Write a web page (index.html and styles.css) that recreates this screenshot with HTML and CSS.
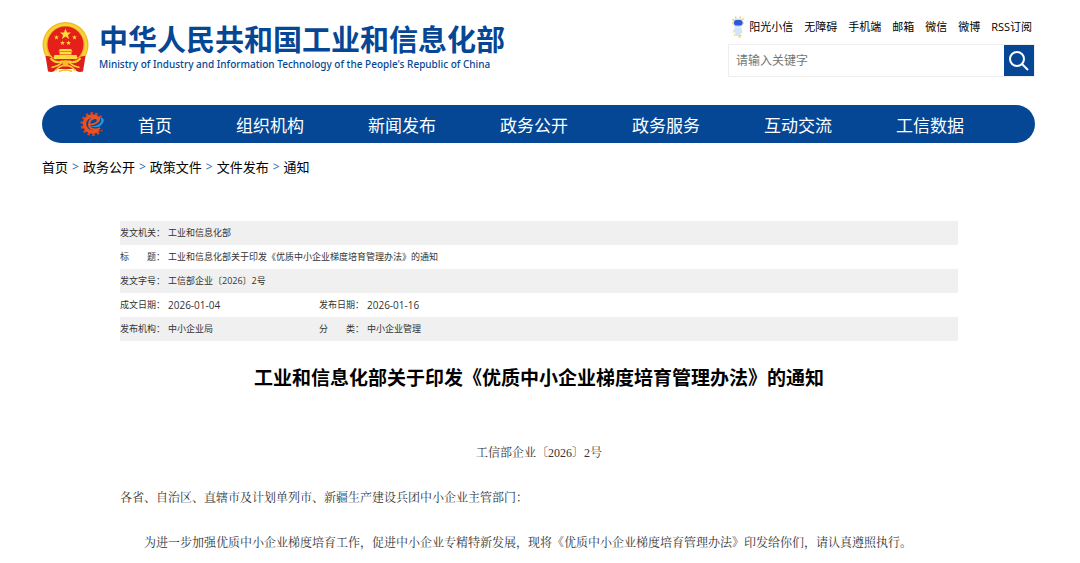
FILE: index.html
```html
<!DOCTYPE html>
<html lang="zh-CN">
<head>
    <meta charset="UTF-8">
    <meta name="viewport" content="width=device-width, initial-scale=1.0">
    <title>工业和信息化部关于印发《优质中小企业梯度培育管理办法》的通知</title>
    <link rel="stylesheet" href="styles.css">
</head>
<body>
    <header class="header">
        <a class="logo" href="#">
            <svg class="emblem" viewBox="0 0 94 102" aria-hidden="true">
                <circle cx="47" cy="46" r="46" fill="#eeb81c"/>
                <circle cx="47" cy="46" r="41" fill="none" stroke="#f8d23c" stroke-width="5"/>
                <circle cx="47" cy="45" r="36" fill="#e71f1b"/>
                <path d="M47 13l3 8h8l-6 5 2 8-7-5-7 5 2-8-6-5h8z" fill="#ffdc3d"/>
                <g fill="#ffdc3d">
                    <path id="star" d="M29 26l1 3h4l-3 2 1 4-3-2-3 2 1-4-3-2h4z"/>
                    <use href="#star" x="36"/>
                    <use href="#star" x="12" y="11"/>
                    <use href="#star" x="24" y="11"/>
                    <path d="M36 54h22l3 5H33zM35 60h24v5H35zM25 66h44l3 8H22z"/>
                </g>
                <path d="M7 68Q16 67 28 76L41 80H53L66 76Q78 67 87 68L82 99Q70 102 66 94H28Q24 102 12 99Z" fill="#db1f1c"/>
                <path d="M17 72Q27 84 39 79H55Q67 84 77 72" fill="none" stroke="#ffce30" stroke-width="4"/>
                <path d="M19 91Q35 88 41 79M75 91Q59 88 53 79M28 97Q34 87 47 87Q60 87 66 97" fill="none" stroke="#ffce30" stroke-width="3"/>
                <circle cx="47" cy="83" r="6" fill="#f6bd25"/>
                <path d="M34 99Q47 93 60 99" fill="none" stroke="#f6bd25" stroke-width="3"/>
            </svg>
            <span class="logo-text">
                <span class="logo-cn">中华人民共和国工业和信息化部</span>
                <span class="logo-en">Ministry of Industry and Information Technology of the People's Republic of China</span>
            </span>
        </a>

        <div class="tools">
            <div class="top-links">
                <a class="robot-link" href="#">
                    <svg class="robot" viewBox="0 0 28 44" aria-hidden="true">
                        <path d="M3 6l3 3M9 1l1 4M18 1v4M25 5l-3 3M2 14h3M26 14h-3" stroke="#f8cf52" stroke-width="3"/>
                        <ellipse cx="14" cy="14" rx="10" ry="9" fill="#c9dcf8"/>
                        <rect x="6" y="8" width="17" height="11" rx="5" fill="#2f57dc"/>
                        <path d="M8 23h12l4 10-4 1-2 6h-8l-2-8-6 2z" fill="#d3e4f6"/>
                        <path d="M6 37l3 2M15 42h4M18 38l2 2" stroke="#f8cf52" stroke-width="3"/>
                    </svg>阳光小信</a>
                <a href="#">无障碍</a>
                <a href="#">手机端</a>
                <a href="#">邮箱</a>
                <a href="#">微信</a>
                <a href="#">微博</a>
                <a href="#">RSS订阅</a>
            </div>
            <form class="search">
                <input type="text" placeholder="请输入关键字" aria-label="请输入关键字">
                <button type="button" aria-label="搜索">
                    <svg viewBox="0 0 20 20" aria-hidden="true">
                        <circle cx="8" cy="8" r="7" fill="none" stroke="#fff" stroke-width="2"/>
                        <path d="M13 13L19 19" stroke="#fff" stroke-width="2"/>
                    </svg>
                </button>
            </form>
        </div>
    </header>

    <nav class="nav">
        <svg class="nav-icon" viewBox="0 0 52 52" aria-hidden="true">
            <circle cx="25" cy="26" r="21" fill="none" stroke="#d9401f" stroke-width="6" stroke-dasharray="5 4.425"/>
            <circle cx="25" cy="26" r="16" fill="none" stroke="#ee501e" stroke-width="7"/>
            <path d="M28 29Q42 26 40 12L52 12V36L44 38Q34 40 28 33Z" fill="#064795"/>
            <path d="M16 27Q30 28 35 21Q38 13 29 14Q19 16 18 26Q18 37 31 37Q36 37 40 34" fill="none" stroke="#f0541f" stroke-width="4"/>
            <path d="M18 30Q36 32 42 22Q44 16 38 12Q52 14 46 24Q38 37 18 30Z" fill="#2696dc"/>
        </svg>
        <a href="#">首页</a>
        <a href="#">组织机构</a>
        <a href="#">新闻发布</a>
        <a href="#">政务公开</a>
        <a href="#">政务服务</a>
        <a href="#">互动交流</a>
        <a href="#">工信数据</a>
    </nav>

    <div class="breadcrumb">
        <a href="#">首页</a>
        <span>&gt;</span>
        <a href="#">政务公开</a>
        <span>&gt;</span>
        <a href="#">政策文件</a>
        <span>&gt;</span>
        <a href="#">文件发布</a>
        <span>&gt;</span>
        <a href="#">通知</a>
    </div>

    <main class="article">
        <table class="info">
            <tr>
                <th>发文机关：</th>
                <td colspan="3">工业和信息化部</td>
            </tr>
            <tr>
                <th>标　　题：</th>
                <td colspan="3">工业和信息化部关于印发《优质中小企业梯度培育管理办法》的通知</td>
            </tr>
            <tr>
                <th>发文字号：</th>
                <td colspan="3">工信部企业〔2026〕2号</td>
            </tr>
            <tr>
                <th>成文日期：</th>
                <td class="first-value date">2026-01-04</td>
                <th>发布日期：</th>
                <td class="date">2026-01-16</td>
            </tr>
            <tr>
                <th>发布机构：</th>
                <td class="first-value">中小企业局</td>
                <th>分　　类：</th>
                <td>中小企业管理</td>
            </tr>
        </table>

        <h1>工业和信息化部关于印发《优质中小企业梯度培育管理办法》的通知</h1>

        <div class="content">
            <p class="doc-number">工信部企业〔2026〕2号</p>
            <p>各省、自治区、直辖市及计划单列市、新疆生产建设兵团中小企业主管部门：</p>
            <p class="indent">为进一步加强优质中小企业梯度培育工作，促进中小企业专精特新发展，现将《优质中小企业梯度培育管理办法》印发给你们，请认真遵照执行。</p>
        </div>
    </main>
</body>
</html>
```
FILE: styles.css
```css
/* Reset */
* {
    box-sizing: border-box;
    margin: 0;
    padding: 0;
}

body {
    padding: 0 45px 0 42px;
    background-color: #fff;
    color: #000;
    font-family: "Open Sans", "Noto Sans CJK SC", sans-serif;
}

a {
    color: inherit;
    text-decoration: none;
}

/* Header */
.header {
    display: flex;
    justify-content: space-between;
    padding-top: 16px;
}

.logo {
    display: flex;
    gap: 10px;
    padding-top: 6px;
    color: #064795;
}

.emblem {
    width: 47px;
    height: 51px;
}

.logo-text {
    display: flex;
    flex-direction: column;
    white-space: nowrap;
}

.logo-cn {
    font-size: 29px;
    line-height: 36px;
    font-weight: bold;
}

.logo-en {
    font-family: "Noto Sans", sans-serif;
    font-size: 10px;
    line-height: 12px;
    font-weight: 500;
}

.top-links {
    display: flex;
    justify-content: flex-end;
    gap: 11px;
    padding-right: 3px;
    font-size: 11px;
    line-height: 22px;
    white-space: nowrap;
}

.robot-link {
    display: flex;
    gap: 4px;
}

.robot {
    width: 14px;
    height: 22px;
}

/* Search box */
.search {
    display: flex;
    width: 307px;
    height: 33px;
    margin-top: 6px;
    border: 1px solid #eee;
}

.search input {
    flex: 1;
    min-width: 0;
    padding: 0 7px;
    border: none;
    background: none;
    font-family: inherit;
    font-size: 12px;
}

.search input::placeholder {
    color: #757575;
}

.search button {
    display: flex;
    align-items: center;
    justify-content: center;
    width: 30px;
    border: none;
    background-color: #064795;
    cursor: pointer;
}

.search svg {
    width: 20px;
    height: 20px;
}

/* Navigation */
.nav {
    display: flex;
    align-items: center;
    gap: 64px;
    height: 38px;
    margin-top: 28px;
    padding-left: 38px;
    border-radius: 19px;
    background-color: #064795;
    color: #fff;
    font-size: 17px;
    white-space: nowrap;
}

.nav-icon {
    width: 26px;
    height: 26px;
    margin-right: -32px;
}

.breadcrumb {
    display: flex;
    gap: 4px;
    padding-top: 14px;
    font-size: 13px;
    line-height: 20px;
}

.breadcrumb span {
    color: #2a6bb5;
    font-size: 12px;
}

/* Article */
.article {
    padding: 44px 77px 0 78px;
}

.info {
    width: 100%;
    border-collapse: collapse;
    color: #333;
    font-size: 9px;
    line-height: 24px;
}

.info tr:nth-child(odd) {
    background-color: #f0f0f0;
}

.info th {
    width: 48px;
    font-weight: normal;
    text-align: left;
    white-space: nowrap;
}

.info .first-value {
    width: 151px;
}

.info .date {
    font-size: 10px;
}

h1 {
    margin-top: 22px;
    font-size: 19px;
    line-height: 30px;
    text-align: center;
}

.content {
    margin-top: 38px;
    color: #333;
    font-family: "Liberation Serif", "Noto Serif CJK SC", "Noto Sans CJK SC", serif;
    font-size: 12px;
    line-height: 45px;
}

.content .doc-number {
    text-align: center;
}

.content .indent {
    text-indent: 2em;
}
```
